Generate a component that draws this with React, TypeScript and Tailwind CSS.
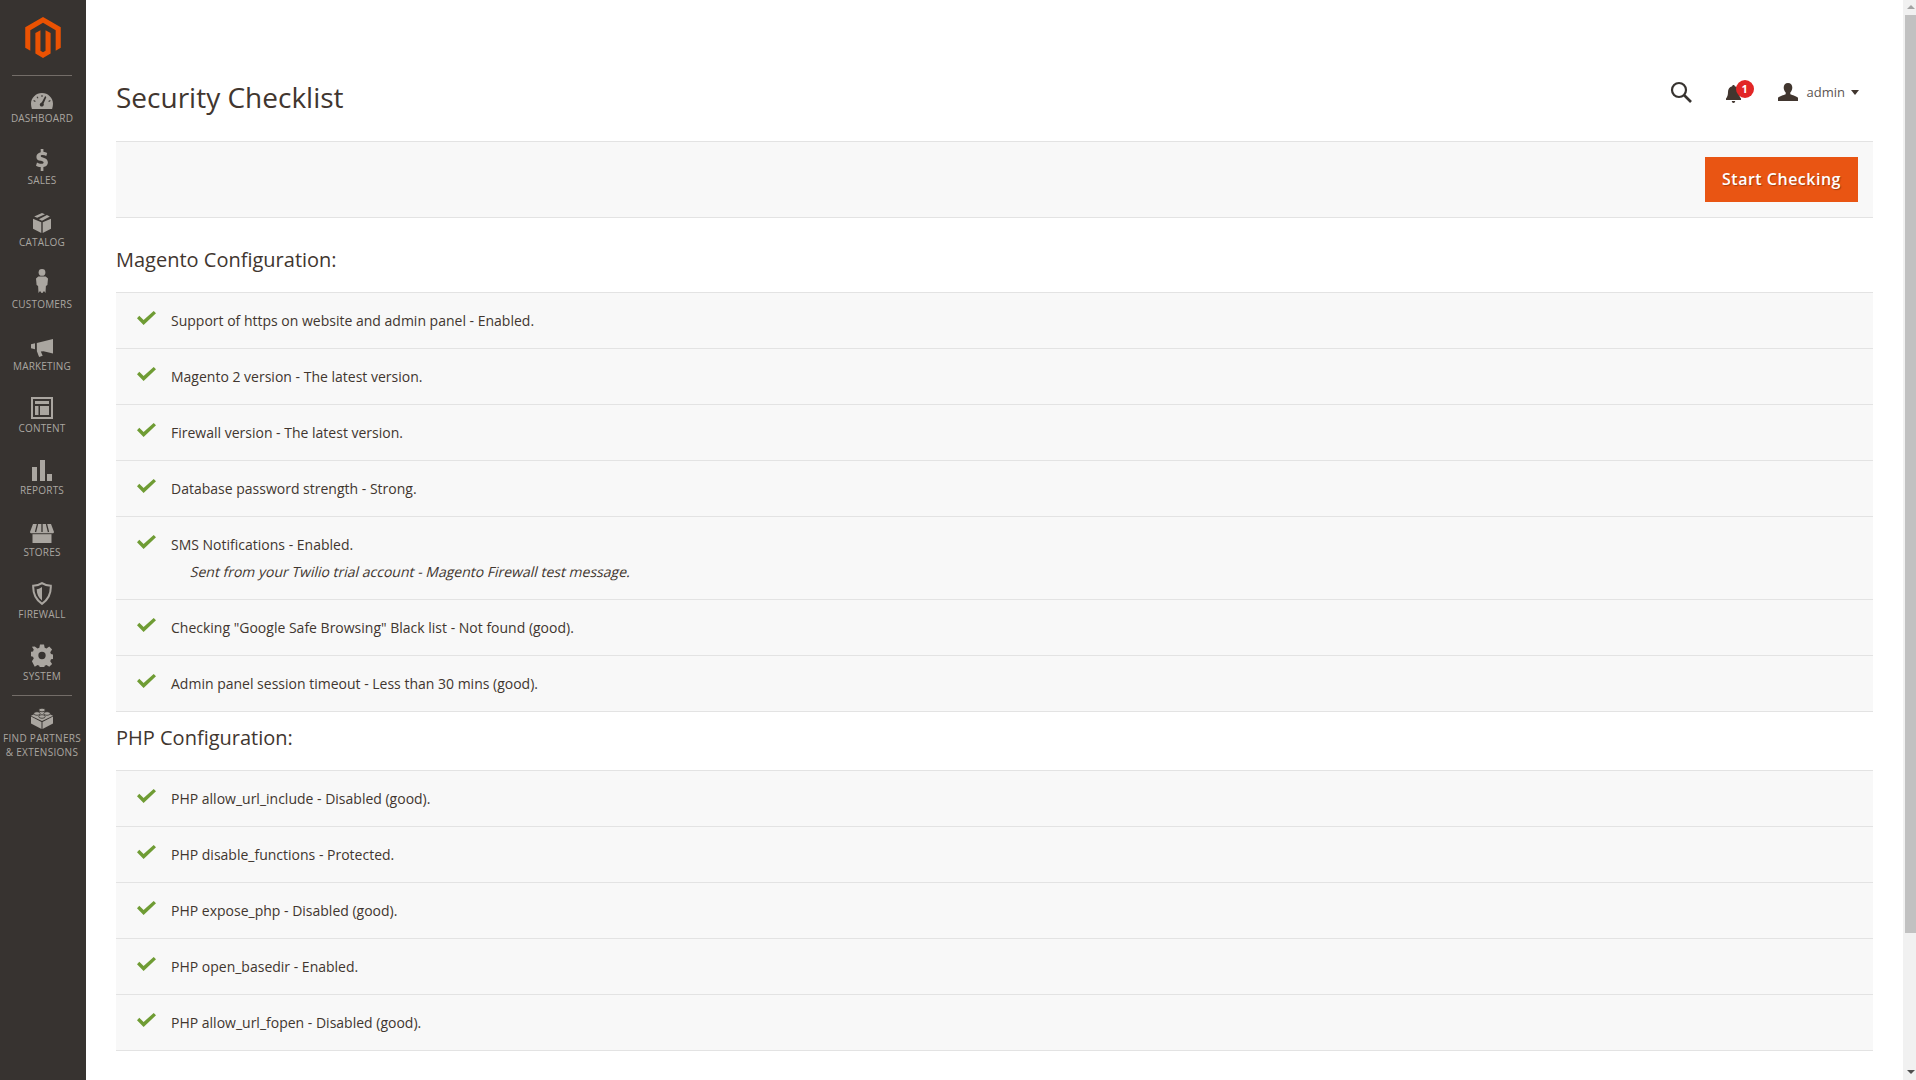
import type { ReactNode } from 'react'

const font = { fontFamily: '"Open Sans", "Noto Sans", sans-serif' }

const navIcons: Record<string, ReactNode> = {
  dashboard: (
    <svg width="22" height="16" viewBox="0 0 22 16" fill="#aaa6a0">
      <path fillRule="evenodd" d="M11 0C5 0 0 4.800 0 10.800c0 1.800.3 3.400.9 5.200h20.200c.6-1.800.9-3.400.9-5.200C22 4.800 17 0 11 0zM15.300 4.200l-2.700 6.400c.5.900.2 2.100-.7 2.700-1 .6-2.200.3-2.800-.6-.6-1-.3-2.200.7-2.800.3-.2.600-.3.900-.3l3.500-6.700z" />
      <g fill="#373330">
        <rect x="10.500" y="2" width="1" height="2" />
        <rect x="6" y="3.500" width="1" height="2" transform="rotate(-30 6.500 4.500)" />
        <rect x="3" y="7" width="1" height="2" transform="rotate(-60 3.500 8)" />
        <rect x="18" y="7" width="1" height="2" transform="rotate(60 18.500 8)" />
      </g>
    </svg>
  ),
  sales: (
    <svg width="12" height="22" viewBox="0 0 12 22" fill="#aaa6a0">
      <path d="M4.700 0h2.700v2.700c1.500.2 2.800.6 3.800 1.200L10.300 7c-1.100-.6-2.400-1.100-3.800-1.100-1.200 0-1.800.4-1.800 1 0 .7.700 1.100 2.800 1.800 3 1 4.400 2.400 4.400 4.700 0 2.300-1.600 4-4.500 4.500V22H4.700v-3.900c-1.800-.1-3.500-.7-4.700-1.400l1-3.200c1.200.7 2.800 1.300 4.500 1.300 1.300 0 2.100-.5 2.100-1.300 0-.8-.7-1.200-2.500-1.800C2 11.800.4 10.400.4 8c0-2.400 1.600-4.100 4.300-4.700V0z" />
    </svg>
  ),
  catalog: (
    <svg width="18" height="20" viewBox="0 0 18 20" fill="#aaa6a0">
      <path d="M0 5.800l8.300 3.400V20L0 15.800zM18 5.800l-8.300 3.400V20l8.300-4.200zM9 0l3 1.300-7.800 3.400-3-1.300zM13.900 2.100l3 1.400L9 7.800 5.900 6.300z" />
    </svg>
  ),
  customers: (
    <svg width="12" height="24" viewBox="0 0 12 24" fill="#aaa6a0" className="mb-[2px]">
      <circle cx="6" cy="3.400" r="3.400" />
      <path d="M2.300 7.500h7.400L12 9.500l-.6 6.500-1.500 1-.4 7-1.500-2-2 2.500-2-2.500-1.500 2-.4-7-1.500-1L0 9.500z" />
    </svg>
  ),
  marketing: (
    <svg width="22" height="18" viewBox="0 0 22 18" fill="#aaa6a0">
      <path d="M22 0v14.500l-9.500-2.200-2.700.2 1.900 4.200-3.600 1.300-2.200-5.700-.1-8.200zM0 5.200l4-.9v5.900l-4-1z" />
    </svg>
  ),
  content: (
    <svg width="22" height="22" viewBox="0 0 22 22" fill="#aaa6a0">
      <path fillRule="evenodd" d="M0 0h22v22H0zM2 2v18h18V2z" />
      <rect x="4" y="4" width="14" height="3" />
      <rect x="4" y="9" width="3.500" height="9" />
      <rect x="9" y="9" width="9" height="9" />
    </svg>
  ),
  reports: (
    <svg width="20" height="21" viewBox="0 0 20 21" fill="#aaa6a0">
      <rect x="0" y="7" width="5" height="14" />
      <rect x="8" y="0" width="5" height="21" />
      <rect x="15" y="14" width="5" height="7" />
    </svg>
  ),
  stores: (
    <svg width="24" height="19" viewBox="0 0 24 19" fill="#aaa6a0">
      <path d="M3 0h18l3 8c0 .8-.8 1.300-1.800 1.300H1.800C.8 9.300 0 8.800 0 8z" />
      <path d="M2.500 10.200h19V19h-19z" />
      <g stroke="#373330" strokeWidth="1.300">
        <path d="M7.500 0L5.500 8M12 0v8M16.500 0l2 8" />
      </g>
    </svg>
  ),
  firewall: (
    <svg width="20" height="23" viewBox="0 0 20 23" fill="none">
      <path d="M10 1.200c2.500 1.700 5.400 2.500 8.800 2.600.3 7.900-2.500 13.800-8.800 18-6.300-4.200-9.100-10.100-8.800-18 3.400-.1 6.300-.9 8.800-2.600z" stroke="#aaa6a0" strokeWidth="2" />
      <path d="M10 5v13.500c-3.500-2.800-5.200-6.500-5.300-11.300C6.600 7 8.400 6.200 10 5z" fill="#aaa6a0" />
    </svg>
  ),
  system: (
    <svg width="22" height="23" viewBox="0 0 24 24" fill="#aaa6a0">
      <path fillRule="evenodd" d="M9.800 0h4.400l.7 3.500 2 .8 3-2 3.100 3.100-2 3 .8 2 3.200.7v4.400l-3.200.7-.8 2 2 3-3.100 3.100-3-2-2 .8-.7 3.500H9.800l-.7-3.500-2-.8-3 2L1 18.300l2-3-.8-2-3.200-.7V8.200l3.200-.7.800-2-2-3L4.100 2.300l3 2 2-.8zM12 8a4 4 0 100 8 4 4 0 000-8z" />
    </svg>
  ),
  partners: (
    <svg width="22" height="22" viewBox="0 0 22 22" fill="#aaa6a0">
      <path d="M0 9.500l10.500 5.500V22L0 16.500zM22 9.500L11.500 15V22L22 16.500z" />
      <path d="M11 3.500L22 8.800 11 14 0 8.800z" />
      <g stroke="#373330" strokeWidth=".8">
        <ellipse cx="11" cy="3" rx="3.200" ry="1.800" />
        <ellipse cx="6" cy="6.500" rx="3.200" ry="1.800" />
        <ellipse cx="16" cy="6.500" rx="3.200" ry="1.800" />
        <ellipse cx="11" cy="9.500" rx="3.200" ry="1.800" />
      </g>
    </svg>
  ),
}

const navItems = [
  ['dashboard', 'Dashboard'],
  ['sales', 'Sales'],
  ['catalog', 'Catalog'],
  ['customers', 'Customers'],
  ['marketing', 'Marketing'],
  ['content', 'Content'],
  ['reports', 'Reports'],
  ['stores', 'Stores'],
  ['firewall', 'Firewall'],
  ['system', 'System'],
]

const magentoChecks = [
  { text: 'Support of https on website and admin panel - Enabled.' },
  { text: 'Magento 2 version - The latest version.' },
  { text: 'Firewall version - The latest version.' },
  { text: 'Database password strength - Strong.' },
  {
    text: 'SMS Notifications - Enabled.',
    note: 'Sent from your Twilio trial account - Magento Firewall test message.',
  },
  { text: 'Checking "Google Safe Browsing" Black list - Not found (good).' },
  { text: 'Admin panel session timeout - Less than 30 mins (good).' },
]

const phpChecks = [
  { text: 'PHP allow_url_include - Disabled (good).' },
  { text: 'PHP disable_functions - Protected.' },
  { text: 'PHP expose_php - Disabled (good).' },
  { text: 'PHP open_basedir - Enabled.' },
  { text: 'PHP allow_url_fopen - Disabled (good).' },
]

function Check() {
  return (
    <svg width="19" height="14" viewBox="0 0 19 14" className="shrink-0" fill="#6f9c34">
      <path d="M0 7.200l2.300-2.400 4.300 4.200L16.700 0 19 2.300 6.600 14z" />
    </svg>
  )
}

function CheckList({ items }: { items: { text: string; note?: string }[] }) {
  return (
    <ul className="border-t border-[#e3e3e3]">
      {items.map((item) => (
        <li key={item.text} className="bg-[#f8f8f8] border-b border-[#e3e3e3] pl-[21px] pt-[17px] pb-[16px]">
          <div className="flex items-start h-[22px]">
            <span className="mt-[1px]">
              <Check />
            </span>
            <span className="ml-[15px] text-[14px] leading-[22px] text-[#41362f]">{item.text}</span>
          </div>
          {item.note && (
            <p className="ml-[54px] mt-[5px] text-[14px] leading-[22px] text-[#41362f]">
              <span className="inline-block -skew-x-[14deg]">{item.note}</span>
            </p>
          )}
        </li>
      ))}
    </ul>
  )
}

function Sidebar() {
  return (
    <aside className="w-[86px] shrink-0 bg-[#373330] flex flex-col items-center pr-[2px]">
      <div className="h-[75px] pt-[17px] flex justify-center w-full">
        <svg width="36" height="41" viewBox="1.600 0 20.800 24" fill="#eb5202" className="ml-[1px]">
          <path d="M12 24l-4.455-2.572v-12l2.970-1.715v12.001l1.485.902 1.485-.902V7.713l2.970 1.715v12L12 24zM22.391 6v12l-2.969 1.714V7.713L12 3.430 4.574 7.713v12.001L1.609 18V6L12 0l10.391 6z" />
        </svg>
      </div>
      <div className="w-[60px] h-px bg-[#736d68]" />
      <nav className="mt-[-2px] w-full">
        {navItems.map(([icon, label]) => (
          <div key={icon} className="h-[62px] flex flex-col items-center">
            <div className="h-[37px] pb-[2px] w-full flex items-end justify-center">{navIcons[icon]}</div>
            <span className="text-[10px] leading-[14px] tracking-[0.2px] uppercase text-[#aaa6a0]">{label}</span>
          </div>
        ))}
      </nav>
      <div className="w-[60px] h-px bg-[#736d68] mt-[1px]" />
      <div className="pt-[10px] flex flex-col items-center">
        <div className="h-[24px] flex items-center">{navIcons.partners}</div>
        <span className="mt-[1px] text-[10px] leading-[14px] tracking-[0.3px] uppercase text-[#aaa6a0] text-center whitespace-nowrap">
          Find Partners
          <br />& Extensions
        </span>
      </div>
    </aside>
  )
}

function Header() {
  return (
    <header className="h-[141px] pt-[75px] pr-[14px] flex items-start justify-between">
      <h1 className="text-[28px] leading-[44px] text-[#41362f]">Security Checklist</h1>
      <div className="flex items-center mt-[6px]">
        <svg width="22" height="22" viewBox="0 0 22 22" fill="none" stroke="#373330" strokeWidth="2.200">
          <circle cx="9" cy="9" r="7" />
          <path d="M14 14l7 7" strokeWidth="2.600" />
        </svg>
        <div className="relative ml-[34px]">
          <svg width="15" height="18" viewBox="0 0 15 18" fill="#41362f" className="mt-[3px]">
            <path d="M7.500 0c.8 0 1.300.6 1.300 1.300C11.500 2 13 4.200 13 7c0 3 .6 5 2 6.500V15H0v-1.500C1.400 12 2 10 2 7c0-2.800 1.500-5 4.200-5.700C6.200.6 6.700 0 7.500 0zM5.800 16h3.400c0 1-.8 2-1.700 2s-1.700-1-1.700-2z" />
          </svg>
          <span className="absolute left-[10px] top-[-2px] w-[18px] h-[18px] rounded-full bg-[#e22626] text-white text-[11px] font-bold leading-[18px] text-center">
            1
          </span>
        </div>
        <svg width="20" height="18" viewBox="0 0 20 18" fill="#41362f" className="ml-[37px]">
          <path d="M10 0c2.700 0 4.300 2 4.300 4.600 0 2-.8 3.800-2 4.900v1.700c1.800 1 6.500 1.700 7.700 3.600V18H0v-3.200c1.200-1.900 5.900-2.600 7.700-3.600V9.500c-1.200-1.100-2-2.900-2-4.900C5.700 2 7.300 0 10 0z" />
        </svg>
        <span className="ml-[9px] text-[13px] leading-[20px] text-[#5c5552]">admin</span>
        <span className="ml-[6px] mt-[1px] w-0 h-0 border-x-[4px] border-x-transparent border-t-[5px] border-t-[#41362f]" />
      </div>
    </header>
  )
}

function Scrollbar() {
  return (
    <div className="w-[13px] shrink-0 bg-[#f1f1f1] flex flex-col pl-[2px]">
      <div className="h-[15px] flex justify-center pt-[5px]">
        <span className="w-0 h-0 border-x-[4px] border-x-transparent border-b-[4px] border-b-[#a3a3a3]" />
      </div>
      <div className="h-[918px] bg-[#c1c1c1]" />
      <div className="flex-1 flex items-end justify-center pb-[6px]">
        <span className="w-0 h-0 border-x-[4px] border-x-transparent border-t-[4px] border-t-[#505050]" />
      </div>
    </div>
  )
}

export default function App() {
  return (
    <div className="flex h-screen overflow-hidden bg-white" style={font}>
      <Sidebar />
      <main className="flex-1 min-w-0 px-[30px] overflow-hidden">
        <Header />
        <div className="h-[77px] bg-[#f8f8f8] border-y border-[#e3e3e3] flex items-center justify-end pr-[15px]">
          <button className="w-[153px] h-[45px] pb-[2px] bg-[#e95513] text-white text-[16px] font-semibold tracking-[0.5px] [text-shadow:1px_1px_1px_rgba(0,0,0,0.3)]">
            Start Checking
          </button>
        </div>
        <h2 className="h-[74px] pt-[28px] text-[20px] leading-[28px] text-[#41362f]">Magento Configuration:</h2>
        <CheckList items={magentoChecks} />
        <h2 className="h-[58px] pt-[12px] text-[20px] leading-[28px] text-[#41362f]">PHP Configuration:</h2>
        <CheckList items={phpChecks} />
      </main>
      <Scrollbar />
    </div>
  )
}
